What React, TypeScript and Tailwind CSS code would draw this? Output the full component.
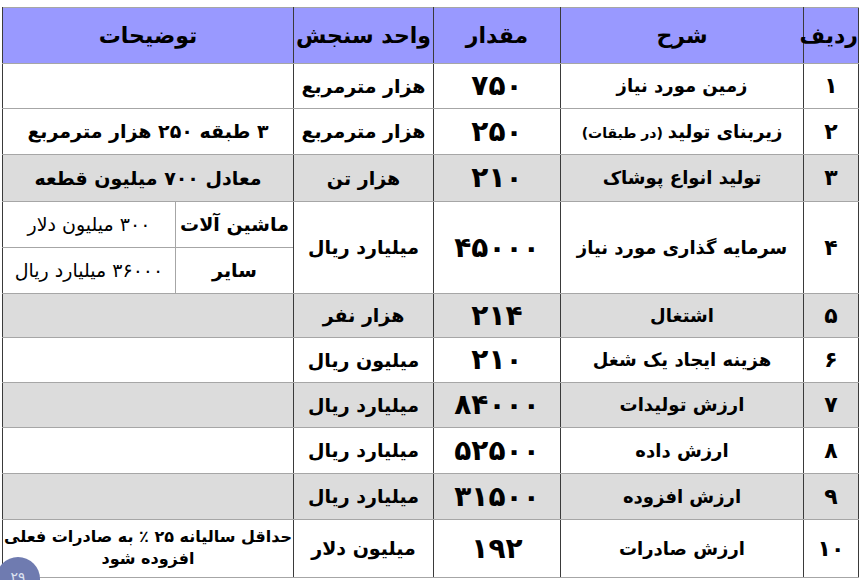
import React from "react";

const rows: { n: string; d: string; q: string; u: string; t: string; gray: boolean; h: string }[] = [
  { n: "۱", d: "زمین مورد نیاز", q: "۷۵۰", u: "هزار مترمربع", t: "", gray: false, h: "h-[45px]" },
  { n: "۲", d: "زیربنای تولید", q: "۲۵۰", u: "هزار مترمربع", t: "۳ طبقه ۲۵۰ هزار مترمربع", gray: false, h: "h-[46px]" },
  { n: "۳", d: "تولید انواع پوشاک", q: "۲۱۰", u: "هزار تن", t: "معادل ۷۰۰ میلیون قطعه", gray: true, h: "h-[47px]" },
];

const rows2: { n: string; d: string; q: string; u: string; gray: boolean; h: string }[] = [
  { n: "۵", d: "اشتغال", q: "۲۱۴", u: "هزار نفر", gray: true, h: "h-[44px]" },
  { n: "۶", d: "هزینه ایجاد  یک شغل", q: "۲۱۰", u: "میلیون ریال", gray: false, h: "h-[45px]" },
  { n: "۷", d: "ارزش تولیدات", q: "۸۴۰۰۰", u: "میلیارد ریال", gray: true, h: "h-[45px]" },
  { n: "۸", d: "ارزش داده", q: "۵۲۵۰۰", u: "میلیارد ریال", gray: false, h: "h-[46px]" },
  { n: "۹", d: "ارزش افزوده", q: "۳۱۵۰۰", u: "میلیارد ریال", gray: true, h: "h-[46px]" },
];

const base = "border-y border-y-[#a6a6a6] border-x border-x-[#3a3a3a] text-center align-middle p-0";
const cell = `${base} leading-none`;

export default function App() {
  return (
    <div
      className="relative w-[861px] h-[580px] overflow-hidden bg-white text-black"
      style={{ fontFamily: '"DejaVu Sans", sans-serif' }}
    >
      <div className="pt-[7px] pl-[2px]">
        <table dir="rtl" className="w-[856px] border-collapse table-fixed font-bold">
          <colgroup>
            <col className="w-[55px]" />
            <col className="w-[243px]" />
            <col className="w-[127px]" />
            <col className="w-[140px]" />
            <col className="w-[118px]" />
            <col className="w-[173px]" />
          </colgroup>
          <tbody>
            <tr className="h-[56px] bg-[#9999ff] text-[22px]">
              <td className={cell}>ردیف</td>
              <td className={cell}>شرح</td>
              <td className={cell}>مقدار</td>
              <td className={cell}>واحد سنجش</td>
              <td className={cell} colSpan={2}>توضیحات</td>
            </tr>
            {rows.map((r) => (
              <tr key={r.n} className={`${r.h} ${r.gray ? "bg-[#dcdcdc]" : "bg-white"}`}>
                <td className={`${cell} text-[22px]`}>{r.n}</td>
                <td className={`${cell} text-[18px]`}>
                  {r.d}
                  {r.n === "۲" && <span className="text-[14px]"> (در طبقات)</span>}
                </td>
                <td className={`${cell} text-[28px]`}>{r.q}</td>
                <td className={`${cell} text-[19px]`}>{r.u}</td>
                <td className={`${cell} text-[19px]`} colSpan={2}>{r.t}</td>
              </tr>
            ))}
            <tr className="h-[46px] bg-white">
              <td className={`${cell} text-[22px]`} rowSpan={2}>۴</td>
              <td className={`${cell} text-[18px]`} rowSpan={2}>سرمایه گذاری مورد نیاز</td>
              <td className={`${cell} text-[28px]`} rowSpan={2}>۴۵۰۰۰</td>
              <td className={`${cell} text-[19px]`} rowSpan={2}>میلیارد ریال</td>
              <td className={`${cell} text-[19px] border-l-[#a6a6a6]`}>ماشین آلات</td>
              <td className={`${cell} text-[19px] font-normal`}>۳۰۰ میلیون دلار</td>
            </tr>
            <tr className="h-[46px] bg-white">
              <td className={`${cell} text-[19px] border-l-[#a6a6a6]`}>سایر</td>
              <td className={`${cell} text-[19px] font-normal`}>۳۶۰۰۰ میلیارد ریال</td>
            </tr>
            {rows2.map((r) => (
              <tr key={r.n} className={`${r.h} ${r.gray ? "bg-[#dcdcdc]" : "bg-white"}`}>
                <td className={`${cell} text-[22px]`}>{r.n}</td>
                <td className={`${cell} text-[18px]`}>{r.d}</td>
                <td className={`${cell} text-[28px]`}>{r.q}</td>
                <td className={`${cell} text-[19px]`}>{r.u}</td>
                <td className={cell} colSpan={2}></td>
              </tr>
            ))}
            <tr className="h-[58px] bg-white">
              <td className={`${cell} text-[22px]`}>۱۰</td>
              <td className={`${cell} text-[18px]`}>ارزش صادرات</td>
              <td className={`${cell} text-[28px]`}>۱۹۲</td>
              <td className={`${cell} text-[19px]`}>میلیون دلار</td>
              <td className={`${base} text-[16px] leading-[22px] pb-[2px]`} colSpan={2}>
                حداقل سالیانه ۲۵ ٪ به صادرات فعلی
                <br />
                افزوده شود
              </td>
            </tr>
          </tbody>
        </table>
      </div>
      <div className="absolute left-[-4px] top-[557px] w-[44px] h-[44px] rounded-full bg-[#6f7bb0] flex justify-center pt-[13px]">
        <span className="text-[14px] text-[#dde2f0] leading-none">۲۹</span>
      </div>
    </div>
  );
}
